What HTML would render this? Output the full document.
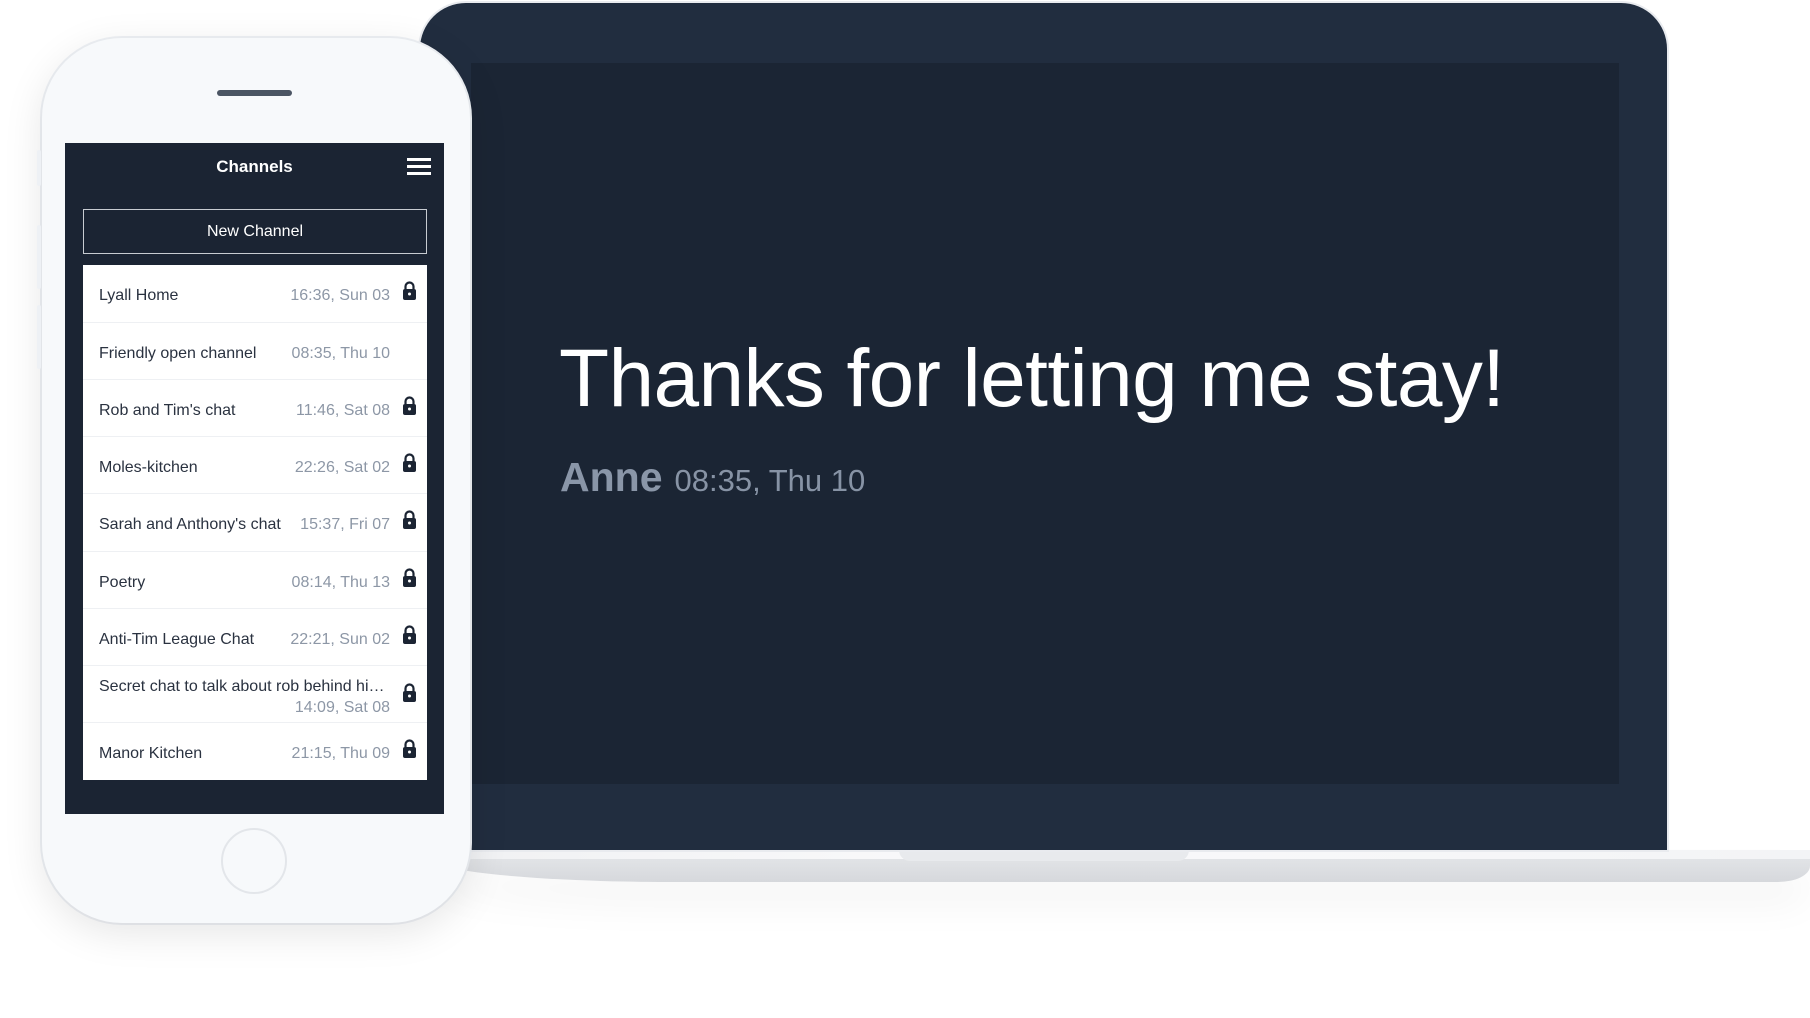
<!DOCTYPE html>
<html><head><meta charset="utf-8"><style>
*{margin:0;padding:0;box-sizing:border-box}
body{width:1810px;height:1018px;background:#fff;position:relative;overflow:hidden;font-family:"Liberation Sans",Arial,sans-serif}
.a{position:absolute}
.row{position:absolute;left:83px;width:344px;border-bottom:1px solid #eef0f3}
.nm{position:absolute;left:16px;font-size:16px;color:#2a3240;white-space:nowrap}
.tm{position:absolute;right:37px;font-size:16px;color:#8d97a6;white-space:nowrap}
.lk{position:absolute;right:10px;width:15px;height:19px}
</style></head><body>
<!-- laptop base -->
<div class="a" style="left:430px;top:858px;width:1380px;height:24px;background:linear-gradient(#e2e4e7,#d6d8dc);border-radius:0 0 40px 300px/0 0 20px 30px;box-shadow:0 20px 40px rgba(0,0,0,.06)"></div>
<div class="a" style="left:440px;top:850px;width:1370px;height:9px;background:linear-gradient(90deg,#f0f1f3,#fafafb 40%,#f3f4f6)"></div>
<div class="a" style="left:899px;top:850px;width:290px;height:11px;background:#e8eaed;border-radius:0 0 12px 12px"></div>
<!-- laptop body -->
<div class="a" style="left:420px;top:3px;width:1247px;height:847px;background:#212d3f;border-radius:46px 46px 0 0;box-shadow:0 0 0 2px #e9ebef"></div>
<div class="a" style="left:471px;top:63px;width:1148px;height:721px;background:#1b2534"></div>
<div class="a" style="left:559px;top:332px;font-size:82px;color:#fff;white-space:nowrap;letter-spacing:-0.6px">Thanks for letting me stay!</div>
<div class="a" style="left:560px;top:454px;white-space:nowrap;color:#8793a5"><b style="font-size:41px;color:#8a96a8">Anne</b><span style="font-size:31px;margin-left:12px">08:35, Thu 10</span></div>
<!-- phone -->
<div class="a" style="left:42px;top:38px;width:428px;height:885px;background:#f7f9fb;border-radius:80px;box-shadow:0 10px 40px rgba(0,0,0,.10),0 0 0 2px #eef1f5"></div>
<div class="a" style="left:37px;top:150px;width:4px;height:36px;background:#eef1f5;border-radius:2px"></div>
<div class="a" style="left:37px;top:225px;width:4px;height:64px;background:#eef1f5;border-radius:2px"></div>
<div class="a" style="left:37px;top:305px;width:4px;height:64px;background:#eef1f5;border-radius:2px"></div>
<div class="a" style="left:217px;top:90px;width:75px;height:6px;background:#4b5563;border-radius:3px"></div>
<div class="a" style="left:221px;top:828px;width:66px;height:66px;border:2px solid #e3e6ea;border-radius:50%"></div>
<div class="a" style="left:65px;top:143px;width:379px;height:671px;background:#1b2433"></div>
<div class="a" style="left:65px;top:157px;width:379px;text-align:center;font-size:17px;font-weight:bold;color:#fff">Channels</div>
<div class="a" style="left:407px;top:158px;width:24px;height:3px;background:#fff"></div>
<div class="a" style="left:407px;top:165px;width:24px;height:3px;background:#fff"></div>
<div class="a" style="left:407px;top:172px;width:24px;height:3px;background:#fff"></div>
<div class="a" style="left:83px;top:209px;width:344px;height:45px;border:1.5px solid #c8ccd2;color:#fff;font-size:16px;text-align:center;line-height:44px">New Channel</div>
<div class="a" style="left:83px;top:265px;width:344px;height:515px;background:#fff"></div>
<svg width="0" height="0" style="position:absolute"><defs><symbol id="L" viewBox="0 0 15 19"><path d="M3.5 8V5.5a4 4 0 0 1 8 0V8" fill="none" stroke="#1b2433" stroke-width="2.2"/><rect x="1" y="8" width="13" height="11" rx="2" fill="#1b2433"/><circle cx="7.5" cy="13" r="1.5" fill="#fff"/></symbol></defs></svg>
<div class="row" style="top:265px;height:58px"><span class="nm" style="top:22px">Lyall Home</span><span class="tm" style="top:22px">16:36, Sun 03</span><svg class="lk" style="top:16px"><use href="#L"/></svg></div>
<div class="row" style="top:323px;height:57px"><span class="nm" style="top:22px">Friendly open channel</span><span class="tm" style="top:22px">08:35, Thu 10</span></div>
<div class="row" style="top:380px;height:57px"><span class="nm" style="top:22px">Rob and Tim's chat</span><span class="tm" style="top:22px">11:46, Sat 08</span><svg class="lk" style="top:16px"><use href="#L"/></svg></div>
<div class="row" style="top:437px;height:57px"><span class="nm" style="top:22px">Moles-kitchen</span><span class="tm" style="top:22px">22:26, Sat 02</span><svg class="lk" style="top:16px"><use href="#L"/></svg></div>
<div class="row" style="top:494px;height:58px"><span class="nm" style="top:22px">Sarah and Anthony's chat</span><span class="tm" style="top:22px">15:37, Fri 07</span><svg class="lk" style="top:16px"><use href="#L"/></svg></div>
<div class="row" style="top:552px;height:57px"><span class="nm" style="top:22px">Poetry</span><span class="tm" style="top:22px">08:14, Thu 13</span><svg class="lk" style="top:16px"><use href="#L"/></svg></div>
<div class="row" style="top:609px;height:57px"><span class="nm" style="top:22px">Anti-Tim League Chat</span><span class="tm" style="top:22px">22:21, Sun 02</span><svg class="lk" style="top:16px"><use href="#L"/></svg></div>
<div class="row" style="top:666px;height:57px"><span class="nm" style="top:12px">Secret chat to talk about rob behind hi…</span><span class="tm" style="top:33px">14:09, Sat 08</span><svg class="lk" style="top:17px"><use href="#L"/></svg></div>
<div class="row" style="top:723px;height:57px;border:none"><span class="nm" style="top:22px">Manor Kitchen</span><span class="tm" style="top:22px">21:15, Thu 09</span><svg class="lk" style="top:16px"><use href="#L"/></svg></div>
</body></html>
